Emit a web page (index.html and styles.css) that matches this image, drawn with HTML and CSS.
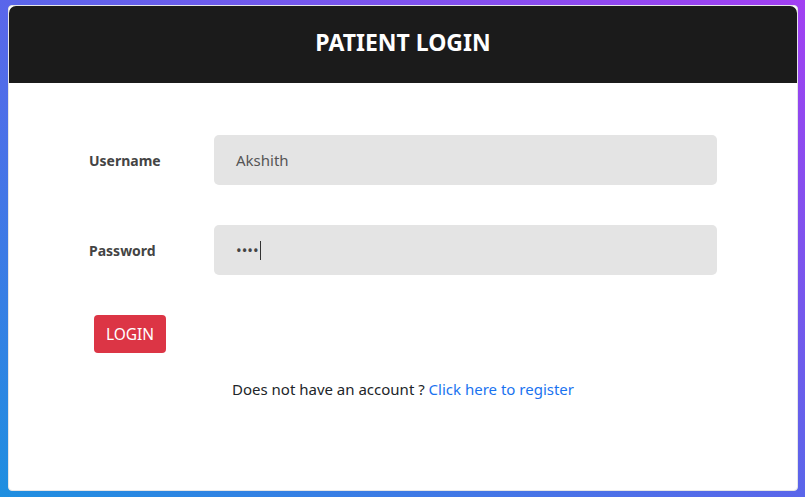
FILE: index.html
```html
<!DOCTYPE html>
<html lang="en">
<head>
<meta charset="utf-8">
<title>Patient Login</title>
<link rel="stylesheet" href="styles.css">
</head>
<body>
<div class="card">
  <div class="card-header">
    <h1 class="title">PATIENT LOGIN</h1>
  </div>
  <form class="card-body">
    <div class="row">
      <label class="label" for="u">Username</label>
      <div class="input"><span class="value">Akshith</span></div>
    </div>
    <div class="row">
      <label class="label" for="p">Password</label>
      <div class="input"><span class="dots">••••</span><span class="caret"></span></div>
    </div>
    <div class="actions">
      <button type="button" class="btn">LOGIN</button>
    </div>
    <p class="register">Does not have an account ? <a href="#" class="link">Click here to register</a></p>
  </form>
</div>
</body>
</html>
```

FILE: styles.css
```css
html, body {
  margin: 0;
  height: 100%;
}
body {
  background: linear-gradient(to top right, #1f8fe0 0%, #5a66ea 50%, #a23ff2 100%);
  padding: 5px 7px 6px 8px;
  box-sizing: border-box;
  font-family: "Noto Sans", "Open Sans", sans-serif;
}
.card {
  width: 790px;
  height: 486px;
  box-sizing: border-box;
  background: #fff;
  border: 1px solid #e6e6e6;
  border-radius: 4px;
  display: flex;
  flex-direction: column;
}
.card-header {
  height: 77px;
  background: #1b1b1b;
  border-radius: 7px 7px 0 0;
  display: flex;
  align-items: center;
  justify-content: center;
}
.title {
  margin: 0 0 6px;
  color: #fff;
  font-size: 23px;
  font-weight: 700;
  letter-spacing: 0;
}
.card-body {
  padding: 52px 80px 0;
  display: flex;
  flex-direction: column;
}
.row {
  display: flex;
  align-items: center;
  margin-bottom: 40px;
}
.label {
  width: 125px;
  flex: none;
  font-size: 14px;
  font-weight: 700;
  color: #444;
}
.input {
  flex: 1;
  height: 50px;
  background: #e4e4e4;
  border-radius: 5px;
  display: flex;
  align-items: center;
  padding-left: 22px;
  font-size: 15px;
  color: #555;
}
.dots {
  font-size: 15px;
  letter-spacing: 0;
  color: #444;
}
.caret {
  display: inline-block;
  width: 1px;
  height: 19px;
  background: #333;
  margin-left: 1px;
}
.actions {
  display: flex;
  padding-left: 5px;
}
.btn {
  width: 72px;
  height: 38px;
  border: none;
  border-radius: 4px;
  background: #dc3545;
  color: #fff;
  font-family: inherit;
  font-size: 15.5px;
  padding: 0;
}
.register {
  margin: 26px 0 0;
  text-align: center;
  font-size: 15px;
  color: #212529;
}
.link {
  color: #1a73f0;
  text-decoration: none;
}
```
